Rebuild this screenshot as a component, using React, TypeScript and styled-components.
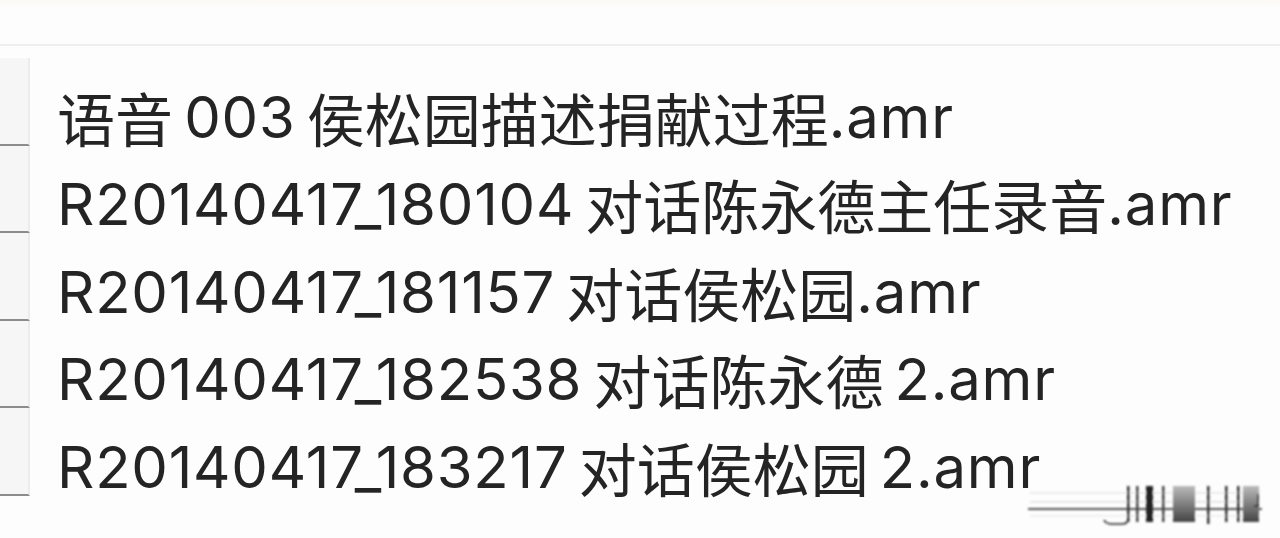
import styled, { createGlobalStyle } from 'styled-components'

const GlobalStyle = createGlobalStyle`
  html, body {
    margin: 0;
    padding: 0;
    background: #fdfdfd;
  }
  body {
    width: 1280px;
    height: 538px;
    overflow: hidden;
  }
`

const files = [
  '语音 003 侯松园描述捐献过程.amr',
  'R20140417_180104 对话陈永德主任录音.amr',
  'R20140417_181157 对话侯松园.amr',
  'R20140417_182538 对话陈永德 2.amr',
  'R20140417_183217 对话侯松园 2.amr',
]

// split a file name into runs of Han characters and runs of everything else
const splitRuns = (name: string) =>
  name.split(/([\u4e00-\u9fff]+)/).filter(Boolean)

const isHan = (s: string) => /[\u4e00-\u9fff]/.test(s)

const Page = styled.div`
  position: relative;
  width: 1280px;
  height: 538px;
  background: #fdfdfd;
  overflow: hidden;
`

const Header = styled.div`
  height: 44px;
  border-bottom: 2px solid #efefef;
  background: linear-gradient(#fbfaf6, #fdfdfd 20%);
`

const List = styled.ul`
  list-style: none;
  margin: 12px 0 0;
  padding: 0;
`

const Row = styled.li`
  display: flex;
  align-items: stretch;
  height: 87.5px;
`

const Cell = styled.div`
  box-sizing: border-box;
  width: 30px;
  flex: none;
  background: #f6f6f6;
  border-right: 2px solid #ececec;
  border-bottom: 2px solid #8c8c8c;
`

const Name = styled.div`
  display: flex;
  align-items: center;
  padding: 30px 0 0 27px;
  font-family: Inter, 'Noto Sans CJK SC', sans-serif;
  font-size: 58px;
  line-height: 58px;
  color: #242424;
  white-space: pre;
`

const Latin = styled.span`
  font-variant-numeric: proportional-nums;
  letter-spacing: 0.8px;
  word-spacing: -6px;
`

const Han = styled.span`
  font-family: 'Noto Sans CJK SC', sans-serif;
`

const Mark = styled.svg`
  position: absolute;
  left: 1026px;
  top: 482px;
`

const Watermark = () => (
  <Mark width="240" height="46" viewBox="0 0 240 46">
    <defs>
      <filter id="soft">
        <feGaussianBlur stdDeviation="0.8" />
      </filter>
      <linearGradient id="fade" x1="0" y1="0" x2="0" y2="1">
        <stop offset="0" stopColor="#bbb" />
        <stop offset="1" stopColor="#444" />
      </linearGradient>
    </defs>
    <g filter="url(#soft)">
      <rect x="4" y="10" width="230" height="1.5" fill="#e6e6e6" />
      <rect x="4" y="19" width="230" height="1.5" fill="#e0e0e0" />
      <rect x="2" y="26" width="234" height="2" fill="#555" />
      <rect x="4" y="33" width="230" height="1.5" fill="#ececec" />
      <path d="M78 38 q2 4 8 4 h10 q5 0 6-4" stroke="#222" strokeWidth="1.6" fill="none" />
      <rect x="101" y="4" width="2.5" height="36" fill="#333" />
      <rect x="110" y="4" width="2.5" height="36" fill="#444" />
      <rect x="120" y="4" width="7" height="36" fill="#222" />
      <rect x="136" y="4" width="2.5" height="36" fill="#444" />
      <rect x="147" y="4" width="22" height="36" fill="url(#fade)" />
      <rect x="181" y="4" width="2.5" height="38" fill="#333" />
      <rect x="199" y="4" width="2.5" height="36" fill="#333" />
      <rect x="211" y="4" width="2.5" height="36" fill="#333" />
      <rect x="217" y="4" width="16" height="36" fill="url(#fade)" />
      <path d="M232 12 v12 h-4" stroke="#222" strokeWidth="1.4" fill="none" />
    </g>
  </Mark>
)

export default function App() {
  return (
    <Page>
      <GlobalStyle />
      <Header />
      <List>
        {files.map(name => (
          <Row key={name}>
            <Cell />
            <Name>
              {splitRuns(name).map((run, i) =>
                isHan(run) ? <Han key={i}>{run}</Han> : <Latin key={i}>{run}</Latin>
              )}
            </Name>
          </Row>
        ))}
      </List>
      <Watermark />
    </Page>
  )
}
